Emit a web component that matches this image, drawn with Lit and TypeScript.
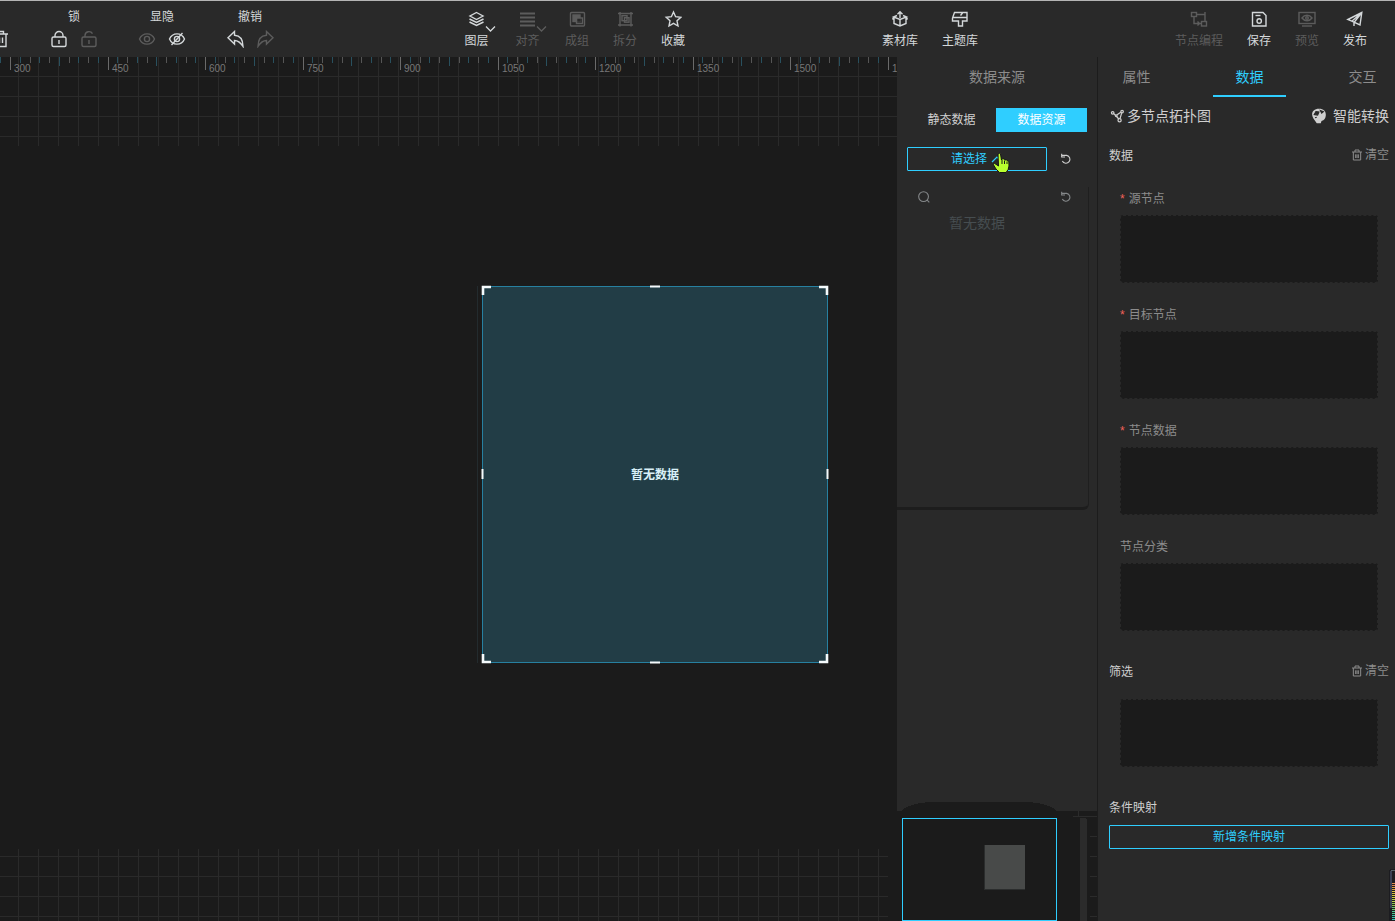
import { LitElement, html, svg, css, type TemplateResult } from "lit";
import { customElement, state } from "lit/decorators.js";
import { classMap } from "lit/directives/class-map.js";

const shapes: Record<string, TemplateResult> = {
  trash: svg`<path d="M2 4h14M6.500 4V1.500h5V4M4 4V16.500h10V4M7.500 7.500v5.500M10.500 7.500v5.500"/>`,
  lock: svg`<rect x="2" y="7" width="14" height="9.500" rx="1.500"/><path d="M5 7V5.500a4 4 0 0 1 8 0V7M9 10v4"/>`,
  unlock: svg`<rect x="2" y="7" width="14" height="9.500" rx="1.500"/><path d="M5 7V5.500a4 4 0 0 1 7.500-1.800M9 10v4"/>`,
  eye: svg`<path d="M1.500 9C4.500 2.200 13.500 2.200 16.500 9 13.500 15.800 4.500 15.800 1.500 9Z"/><circle cx="9" cy="9" r="2.600"/>`,
  eyeOff: svg`<path d="M1.500 9C4.500 2.200 13.500 2.200 16.500 9 13.500 15.800 4.500 15.800 1.500 9Z"/><circle cx="9" cy="9" r="2.600"/><path d="M14.500 3 3.500 15"/>`,
  undo: svg`<path d="M8.500 1.500 2 7.800 8.500 14V10.500c4 0 6 2 8.500 6C17 9.500 14 5.500 8.500 5.200Z"/>`,
  redo: svg`<path d="M10.500 1.500 17 7.800 10.500 14V10.500c-4 0-6 2-8.500 6C2 9.500 5 5.500 10.500 5.200Z"/>`,
  layers: svg`<path d="M8.500 2.500 15 6 8.500 9.500 2 6Z"/><path d="M1.500 9l7 3.500 7-3.500M1.500 12l7 3.500 7-3.500"/>`,
  align: svg`<path d="M1 3.500h15M1 7.500h15M1 11.500h15M1 15.500h15" stroke-width="1.800"/>`,
  group: svg`<rect x="2.500" y="2.500" width="14" height="13.500" rx="1"/><rect x="5" y="5" width="7" height="6.500" fill="currentColor"/><rect x="8.500" y="8" width="6" height="5.500"/><path d="M10 9.500h2v1.500h-2Z" stroke="#292929"/>`,
  split: svg`<path d="M4 2v14.500M15 2v14.500M2 3.500h15M2 15h15" stroke-width="1.400"/><rect x="6" y="5.700" width="5" height="5"/><rect x="8.500" y="7.700" width="4.500" height="4.500"/>`,
  star: svg`<path d="m9.500 2 2.100 4.700 5.200.6-3.800 3.500 1 5.200-4.500-2.600L5 16l1-5.200-3.800-3.500 5.200-.6Z"/>`,
  box: svg`<path d="M6 5.500 2.500 7 9 9.500 15.500 7 12 5.500M3 7.500V13.500L9 16l6-2.500V7.500M9 9.500V16M1.500 9.500 3 7.200M16.500 9.500 15 7.200M9 8V2M6.500 4.200 9 1.800l2.500 2.400"/>`,
  theme: svg`<path d="M3.500 2.500h12.500V11h-4.500v5h-4v-5H1.500V8ZM2 7.500h14M9.500 5.500 11.500 3"/>`,
  nodes: svg`<rect x="1.500" y="2.500" width="5" height="4"/><rect x="11.500" y="11.500" width="5" height="4.500"/><path d="M4 6.500v7h7.500M6.500 4.500H15v7M15 2v4M7.500 11.500l2 2-2 2"/>`,
  save: svg`<path d="M2.500 2.500H13l3 3V16H2.500Z"/><path d="M5.500 5.500h5"/><circle cx="9.200" cy="11" r="2.200"/>`,
  preview: svg`<rect x="1" y="2.500" width="16" height="11"/><path d="M4 16h10"/><path d="M4 8c2.500-3.600 7.500-3.600 10 0-2.500 3.600-7.500 3.600-10 0Z"/><circle cx="9" cy="8" r="1.300"/>`,
  send: svg`<path d="M15.800 2.500 1.800 9.500 5.800 11.200 14 15ZM5.800 11.200 15.800 2.500 8 12.500V16"/>`,
  reload: svg`<path d="M2.500 3.500h7.500a6 6 0 1 1-6.500 8.500M2.500 1v5h5" stroke-width="1.700"/>`,
  search: svg`<circle cx="8.500" cy="8.500" r="5.500"/><path d="m12.500 12.500 2.500 2.500"/>`,
  bin: svg`<path d="M1.500 4.500h15M6 4.500V1.500h6v3M3.500 4.500v12h11v-12M7 8v5.500M9 8v5.500M11 8v5.500" stroke-width="1.500"/>`,
  topology: svg`<circle cx="3.200" cy="4.500" r="1.500"/><circle cx="14.500" cy="3" r="1.500"/><circle cx="11.500" cy="13.500" r="1.900"/><circle cx="7.500" cy="8" r="1"/><path d="m4.500 5.500 2 2M8.500 7l4.500-3M8 9l2.500 3M14 5l-2 6.500"/>`,
  brain: svg`<path d="M9 .8C4 .8 1 3.500 1.300 7.500c.2 2.500 1.500 4 2.200 5.500l3 4.200h4.500l.8-2.500c3.200-.5 4.700-3 4.900-6.700C16.900 3.500 14 .8 9 .8Z" fill="currentColor" stroke="none"/><path d="M3.500 7.500 5.500 4l3.500.5L7.500 8ZM10.500 2.800l3.500 1.400-2 1.600ZM4.500 11l2-.5" fill="#292929" stroke="#292929" stroke-width="1.200"/>`,
};

const icon = (name: string, size = 18) =>
  html`<svg class="icon" width=${size} height=${size} viewBox="0 0 18 18" aria-hidden="true">${shapes[name]}</svg>`;

interface Tool {
  label: string;
  icon: string;
  off?: boolean;
  menu?: boolean;
  size?: string;
}

const editGroups = [
  { label: "锁", tools: [{ icon: "lock" }, { icon: "unlock", off: true }] },
  { label: "显隐", tools: [{ icon: "eye", off: true }, { icon: "eyeOff" }] },
  { label: "撤销", tools: [{ icon: "undo" }, { icon: "redo", off: true }] },
];
const arrangeTools: Tool[] = [
  { label: "图层", icon: "layers", menu: true, size: "menu" },
  { label: "对齐", icon: "align", off: true, menu: true, size: "menu" },
  { label: "成组", icon: "group", off: true },
  { label: "拆分", icon: "split", off: true },
  { label: "收藏", icon: "star" },
];
const libraryTools: Tool[] = [
  { label: "素材库", icon: "box", size: "mid" },
  { label: "主题库", icon: "theme", size: "mid" },
];
const publishTools: Tool[] = [
  { label: "节点编程", icon: "nodes", off: true, size: "wide" },
  { label: "保存", icon: "save" },
  { label: "预览", icon: "preview", off: true },
  { label: "发布", icon: "send" },
];

@customElement("top-toolbar")
export class TopToolbar extends LitElement {
  static styles = css`
    :host {
      display: flex;
      flex: none;
      height: 56px;
      border-top: 1px solid #b4b4b4;
      background: #292929;
      color: #d4d8da;
      font-size: 12px;
      line-height: 16px;
      overflow: hidden;
    }
    button {
      padding: 0;
      border: 0;
      background: none;
      color: inherit;
      font: inherit;
    }
    .off { color: #5c5c5c; }
    .icon { display: block; fill: none; stroke: currentColor; stroke-width: 1.4; }
    .gap { flex: 157 1 0; }
    .gap.large { flex-grow: 173; }
    .edit { display: flex; flex: none; align-items: flex-start; padding-top: 8px; }
    .bin { width: 30px; padding-top: 21px; }
    .bin .icon { margin-left: -8px; }
    .group { width: 88px; text-align: center; }
    .pair { display: flex; justify-content: center; gap: 12px; padding-top: 5px; }
    .tools { display: flex; flex: none; align-items: flex-start; }
    .tools.end { padding-right: 16px; }
    .tool {
      position: relative;
      display: flex;
      flex-direction: column;
      align-items: center;
      gap: 5px;
      width: 48px;
      padding-top: 9px;
      white-space: nowrap;
    }
    .tool.menu { width: 51px; }
    .tool.mid { width: 60px; }
    .tool.wide { width: 72px; }
    .caret { position: absolute; left: 34px; top: 24px; fill: none; stroke: currentColor; stroke-width: 1.3; }
  `;

  private tool(t: Tool) {
    const cls = { tool: true, off: !!t.off, menu: t.size === "menu", mid: t.size === "mid", wide: t.size === "wide" };
    return html`<button class=${classMap(cls)}>
      ${icon(t.icon)}<span>${t.label}</span>
      ${t.menu ? html`<svg class="caret" width="11" height="8" viewBox="0 0 11 8"><path d="m1 1.500 4.500 4.500L10 1.500" /></svg>` : ""}
    </button>`;
  }

  render() {
    return html`
      <div class="edit">
        <button class="bin" aria-label="删除">${icon("trash")}</button>
        ${editGroups.map(
          (g) => html`<div class="group">
            <div>${g.label}</div>
            <div class="pair">
              ${g.tools.map((t: { icon: string; off?: boolean }) => html`<button class=${classMap({ off: !!t.off })} aria-label=${g.label}>${icon(t.icon)}</button>`)}
            </div>
          </div>`
        )}
      </div>
      <div class="gap"></div>
      <div class="tools">${arrangeTools.map((t) => this.tool(t))}</div>
      <div class="gap large"></div>
      <div class="tools">${libraryTools.map((t) => this.tool(t))}</div>
      <div class="gap large"></div>
      <div class="tools end">${publishTools.map((t) => this.tool(t))}</div>
    `;
  }
}

@customElement("design-canvas")
export class DesignCanvas extends LitElement {
  static styles = css`
    :host {
      position: relative;
      display: flex;
      flex: 1;
      flex-direction: column;
      justify-content: space-between;
      min-width: 0;
      overflow: hidden;
      background: #1b1b1b;
    }
    .grid {
      background-image: linear-gradient(#2a2a2a 1px, transparent 1px),
        linear-gradient(90deg, #2a2a2a 1px, transparent 1px);
      background-size: 20px 20px;
    }
    .upper { height: 89px; background-position: 18px 19px; }
    .lower { height: 72px; margin-right: 9px; background-position: 18px 7px; }
    .ruler { display: block; width: 100%; height: 19px; font: 10px "Liberation Sans", sans-serif; }
    .tick { fill: #6a6a6a; }
    .tick.minor { fill: #555; }
    .tick.tint { fill: #29505e; }
    .mark { fill: #777; }
    .guide { position: absolute; left: 477px; top: 229px; width: 1px; height: 377px; background: #232b2e; }
    .node {
      position: absolute;
      left: 482px;
      top: 229px;
      box-sizing: border-box;
      width: 346px;
      height: 377px;
      border: 1px solid #2780a0;
      background: #223d46;
      color: #d8f0f8;
      font-size: 12px;
      font-weight: 700;
      line-height: 376px;
      text-align: center;
    }
    .handles { position: absolute; left: -2px; top: -2px; fill: none; stroke: #f4fafc; stroke-width: 2; }
  `;

  @state() private span = 0;

  private observer = new ResizeObserver(([entry]) => {
    this.span = entry.contentRect.width;
  });

  connectedCallback() {
    super.connectedCallback();
    this.observer.observe(this);
  }

  disconnectedCallback() {
    this.observer.disconnect();
    super.disconnectedCallback();
  }

  private ticks() {
    const count = Math.ceil(this.span / 9.75);
    return Array.from({ length: count }, (_, n) => {
      const k = n - 1;
      const x = Math.round(10 + k * 9.75);
      const major = k % 10 === 0;
      const mid = k % 5 === 0;
      const cls = major ? "tick" : k % 2 ? "tick tint" : "tick minor";
      return svg`<rect class=${cls} x=${x} y="0" width="1" height=${major ? 13 : mid ? 9 : 6}></rect>
        ${major ? svg`<text class="mark" x=${x + 4} y="15">${300 + k * 15}</text>` : ""}`;
    });
  }

  render() {
    return html`
      <div class="grid upper"><svg class="ruler">${this.ticks()}</svg></div>
      <div class="guide"></div>
      <div class="node">
        暂无数据
        <svg class="handles" width="348" height="379" viewBox="0 0 348 379">
          <path d="M2 10V2h8M338 2h8v8M2 369v8h8M338 377h8v-8" stroke-width="2.600" />
          <path d="M169 1.500h10M169 377.500h10M1.500 184v10M346.500 184v10" />
        </svg>
      </div>
      <div class="grid lower"></div>
    `;
  }
}

@customElement("source-panel")
export class SourcePanel extends LitElement {
  static styles = css`
    :host {
      display: flex;
      flex: none;
      flex-direction: column;
      width: 200px;
      background: #292929;
      color: #cfcfcf;
      font-size: 12px;
      line-height: 20px;
    }
    button {
      padding: 0;
      border: 0;
      background: none;
      color: inherit;
      font: inherit;
    }
    .icon { display: block; fill: none; stroke: currentColor; stroke-width: 1.2; }
    h2 { margin: 0; padding: 10px 0; color: #8c8c8c; font-size: 14px; font-weight: 400; text-align: center; }
    .kinds { display: grid; grid-template-columns: 89px 91px; margin: 11px 10px 15px; }
    .kinds button { height: 24px; }
    .kinds .on { background: #2fceff; color: #fff; }
    .pick { display: flex; align-items: center; gap: 13px; padding: 0 10px; }
    .choose {
      display: flex;
      align-items: center;
      justify-content: center;
      gap: 4px;
      box-sizing: border-box;
      width: 140px;
      height: 24px;
      border: 1px solid #2fceff;
      border-radius: 1px;
      color: #2fceff;
    }
    .drop {
      box-sizing: border-box;
      height: 323px;
      margin: 16px 8px 0 0;
      border-right: 1px solid #1f1f1f;
      border-bottom: 3px solid #1d1d1d;
      border-radius: 0 0 6px 0;
      color: #85888a;
    }
    .find { display: flex; align-items: center; padding: 1px 16px 0 19px; }
    .find input {
      flex: 1;
      min-width: 0;
      height: 18px;
      padding: 0 6px;
      border: 0;
      outline: 0;
      background: none;
      color: inherit;
      font: inherit;
    }
    .empty { margin: 7px 0 0; padding-right: 31px; color: #464d50; font-size: 14px; text-align: center; }
    .map { display: block; margin-top: auto; }
  `;

  render() {
    return html`
      <h2>数据来源</h2>
      <div class="kinds"><button>静态数据</button><button class="on">数据资源</button></div>
      <div class="pick">
        <button class="choose">
          请选择<svg class="icon" width="12" height="12" viewBox="0 0 12 12"><path d="m1 9 5-5 5 5" /></svg>
        </button>
        <button aria-label="刷新">${icon("reload", 12)}</button>
      </div>
      <div class="drop">
        <div class="find">
          ${icon("search", 16)}<input type="text" aria-label="搜索" />
          <button aria-label="重置">${icon("reload", 12)}</button>
        </div>
        <p class="empty">暂无数据</p>
      </div>
      <svg class="map" width="200" height="119" viewBox="0 0 200 119" shape-rendering="crispEdges" aria-hidden="true">
        <path d="M0 9h4Q14 0 38 0h88q24 0 34 9h40v110H0Z" fill="#1b1b1b" />
        <path d="M176 14.500h24M181.500 9v5M193 34.500h7M193 54.500h7M193 74.500h7M193 94.500h7M193 114.500h7" stroke="#2b2b2b" />
        <path d="M183 119V16h5l2 2v101Z" fill="#2b2b2b" />
        <rect x="5.500" y="16.500" width="154" height="102" fill="none" stroke="#2fceff" />
        <rect x="87" y="43" width="41" height="45" fill="#2b2d2d" />
        <rect x="88" y="43" width="40" height="44" fill="#484a49" />
      </svg>
    `;
  }
}

const fields = [
  { label: "源节点", required: true },
  { label: "目标节点", required: true },
  { label: "节点数据", required: true },
  { label: "节点分类", required: false },
];

@customElement("data-panel")
export class DataPanel extends LitElement {
  static styles = css`
    :host {
      flex: none;
      box-sizing: border-box;
      width: 298px;
      border-left: 1px solid #1c1c1c;
      overflow: hidden;
      background: #292929;
      color: #cfcfcf;
      font-size: 12px;
      line-height: 20px;
    }
    button {
      padding: 0;
      border: 0;
      background: none;
      color: inherit;
      font: inherit;
    }
    .icon { display: block; fill: none; stroke: currentColor; stroke-width: 1.5; }
    .tabs { display: flex; justify-content: space-between; margin: 0 -4px 0 2px; color: #8c8c8c; font-size: 14px; }
    .tabs button { box-sizing: border-box; width: 73px; height: 40px; border-bottom: 2px solid transparent; padding-top: 2px; }
    .tabs .on { border-color: #2fceff; color: #2fceff; }
    .body { padding: 9px 6px 0 11px; }
    .kind, .head { display: flex; align-items: center; justify-content: space-between; }
    .kind { margin-bottom: 20px; font-size: 14px; }
    .name, .convert, .clear { display: flex; align-items: center; }
    .name { gap: 2px; padding-left: 1px; }
    .convert { gap: 6px; }
    .clear { gap: 2px; height: 20px; padding-bottom: 2px; color: #8c8c8c; }
    .fields { display: grid; gap: 22px; padding: 23px 11px 31px; }
    .label { margin-bottom: 6px; color: #8c8c8c; }
    .star { margin-right: 4px; color: #f0625a; }
    .slot { box-sizing: border-box; height: 68px; border: 1px dashed #292929; border-radius: 3px; background: #1b1b1b; }
    .filter { padding: 17px 11px 31px; }
    .add {
      box-sizing: border-box;
      width: 100%;
      height: 24px;
      margin-top: 7px;
      border: 1px solid #2fceff;
      border-radius: 1px;
      color: #2fceff;
    }
  `;

  private head(title: string) {
    return html`<div class="head"><span>${title}</span><button class="clear">${icon("bin", 12)}清空</button></div>`;
  }

  render() {
    return html`
      <nav class="tabs"><button>属性</button><button class="on">数据</button><button>交互</button></nav>
      <div class="body">
        <div class="kind">
          <span class="name">${icon("topology", 15)}多节点拓扑图</span>
          <button class="convert">${icon("brain", 16)}智能转换</button>
        </div>
        ${this.head("数据")}
        <div class="fields">
          ${fields.map(
            (f) => html`<div>
              <div class="label">${f.required ? html`<span class="star">*</span>` : ""}${f.label}</div>
              <div class="slot"></div>
            </div>`
          )}
        </div>
        ${this.head("筛选")}
        <div class="filter"><div class="slot"></div></div>
        <div>条件映射</div>
        <button class="add">新增条件映射</button>
      </div>
    `;
  }
}

@customElement("app-root")
export class AppRoot extends LitElement {
  static styles = css`
    :host {
      position: relative;
      display: flex;
      flex-direction: column;
      height: 100vh;
      overflow: hidden;
      background: #1b1b1b;
      font-family: "Liberation Sans", "Noto Sans CJK SC", sans-serif;
    }
    .work { display: flex; flex: 1; min-height: 0; }
    .pointer { position: absolute; right: 385px; top: 152px; }
    .meter { position: absolute; right: 0; bottom: 0; }
  `;

  render() {
    const bars = ["#e08a50", "#e0a040", "#d8c040", "#d0d040", "#b8d048", "#90c850", "#70c870", "#50c890", "#38c8a8", "#30c8b8"];
    return html`
      <top-toolbar></top-toolbar>
      <div class="work">
        <design-canvas></design-canvas>
        <source-panel></source-panel>
        <data-panel></data-panel>
      </div>
      <svg class="pointer" width="18" height="22" viewBox="0 0 18 22" aria-hidden="true">
        <path
          d="M6 2q1.500-1.500 2.500 0L9.500 8l1-1.300 2 .3.500 1 2-.2.500 1.200 1.300.3L17 14q-.3 4-3 6.500H7.500L4 17 1 12q1-1.500 3 .3L6.500 14Z"
          fill="#b9ff2e"
          stroke="#161616"
        />
        <path d="M10 8v4M12.500 8.500V12M15 9.500V12" stroke="#161616" />
      </svg>
      <svg class="meter" width="6" height="52" viewBox="0 0 6 52" shape-rendering="crispEdges" aria-hidden="true">
        <path d="M0 52V1l1-1h5v52Z" fill="#1c1c20" />
        <path d="M1 2h2v37H1Z" fill="#3a4054" />
        <path d="M2 1h4v1H2Z" fill="#56636a" />
        ${Array.from({ length: 19 }, (_, i) => svg`<rect x="3" y=${14 + i * 2} width="3" height="1" fill=${bars[i >> 1]}></rect>`)}
      </svg>
    `;
  }
}
